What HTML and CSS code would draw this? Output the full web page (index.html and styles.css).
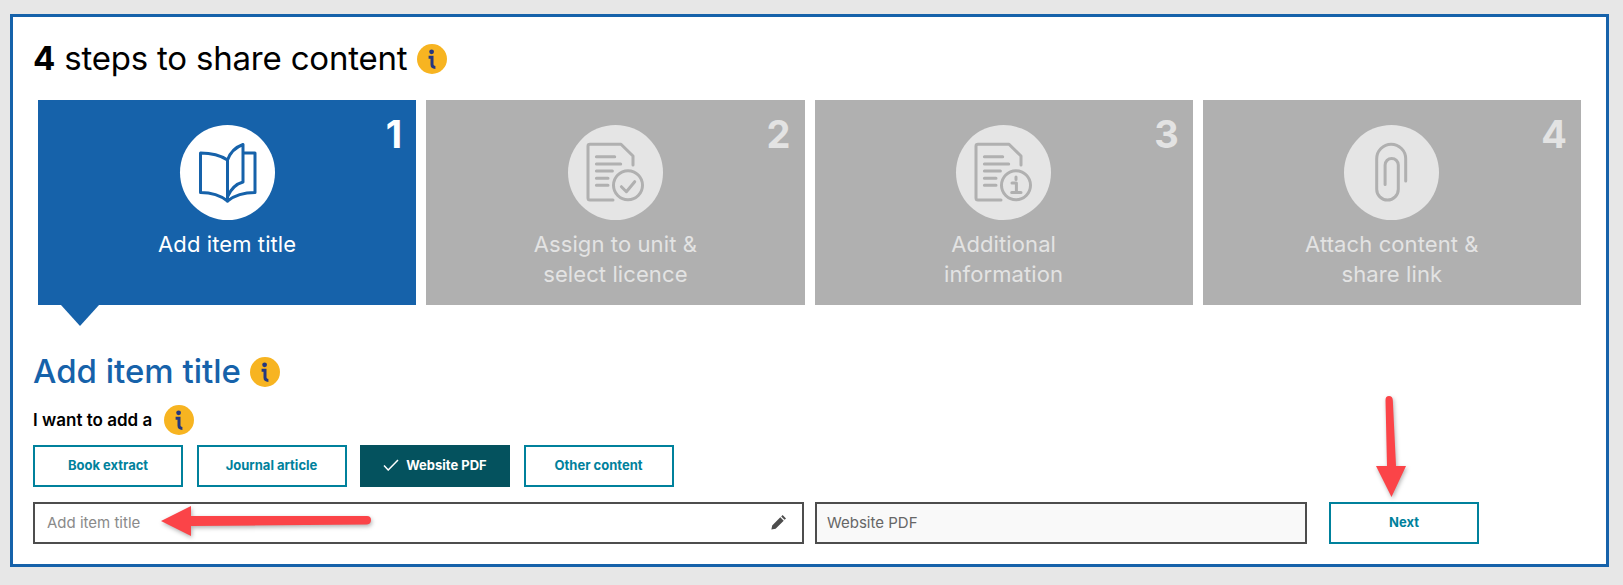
FILE: index.html
```html
<!DOCTYPE html>
<html lang="en">
<head>
<meta charset="utf-8">
<title>4 steps to share content</title>
<link rel="stylesheet" href="styles.css">
</head>
<body>
<svg width="0" height="0" class="defs" aria-hidden="true">
  <symbol id="info" viewBox="0 0 30 30">
    <circle cx="15" cy="15" r="15" fill="#f7b421"/>
    <circle cx="14.6" cy="7.8" r="2.4" fill="#24377f"/>
    <path d="M11.6 13.2H15V20.6Q15 23.4 18.4 23.4" fill="none" stroke="#24377f" stroke-width="3"/>
  </symbol>
</svg>
<main class="panel">
  <div class="title-row">
    <h1 class="title"><b>4</b> steps to share content</h1>
    <svg class="info"><use href="#info"/></svg>
  </div>
  <div class="steps">
    <section class="step step-active">
      <span class="step-num">1</span>
      <div class="step-circle">
        <svg viewBox="0 0 95 95" class="step-icon icon-blue">
          <path d="M47.5 35C40 30 30 28 20.5 28V67.5C30 67.5 40 70 47.5 76C55 70 65 67.5 75 67.5V28H64"/>
          <path d="M47.5 76V35C50 28 56 22 63 19.5V57C56 59 51 64 48 71"/>
        </svg>
      </div>
      <div class="step-label">Add item title</div>
    </section>
    <section class="step">
      <span class="step-num">2</span>
      <div class="step-circle">
        <svg viewBox="0 0 95 95" class="step-icon">
          <path d="M45 75H22Q20 75 20 73V21Q20 19.3 22 19.3H53L65 31V40"/>
          <path d="M28.4 31.7H46.7M28.4 39H52.7M28.4 46H44.4M28.4 53.3H40M28.4 60.3H40"/>
          <circle cx="60" cy="60.3" r="14.5"/>
          <path d="M53.4 61.7L58.4 66.7L66.7 56.7"/>
        </svg>
      </div>
      <div class="step-label">Assign to unit &amp;<br>select licence</div>
    </section>
    <section class="step">
      <span class="step-num">3</span>
      <div class="step-circle">
        <svg viewBox="0 0 95 95" class="step-icon">
          <path d="M45 75H22Q20 75 20 73V21Q20 19.3 22 19.3H53L65 31V40"/>
          <path d="M28.4 31.7H46.7M28.4 39H52.7M28.4 46H44.4M28.4 53.3H40M28.4 60.3H40"/>
          <circle cx="60" cy="60.3" r="14.5"/>
          <path d="M56 58H60.4V67M55.7 67.4H65M60 52V54.5"/>
        </svg>
      </div>
      <div class="step-label">Additional<br>information</div>
    </section>
    <section class="step">
      <span class="step-num">4</span>
      <div class="step-circle">
        <svg viewBox="0 0 95 95" class="step-icon">
          <path d="M61.7 56V33.8a14.5 14.5 0 0 0-29 0V64.2a10.8 10.8 0 0 0 21.6 0V40a6.6 6.6 0 0 0-13.2 0V59.5"/>
        </svg>
      </div>
      <div class="step-label">Attach content &amp;<br>share link</div>
    </section>
  </div>
  <div class="heading-row">
    <h2 class="heading">Add item title</h2>
    <svg class="info"><use href="#info"/></svg>
  </div>
  <div class="want-row">
    <span class="want">I want to add a</span>
    <svg class="info"><use href="#info"/></svg>
  </div>
  <div class="choices">
    <button class="btn">Book extract</button>
    <button class="btn">Journal article</button>
    <button class="btn btn-active">
      <svg class="check" viewBox="0 0 16 12"><path d="M1 6.5L5.2 11L15 1"/></svg>Website PDF
    </button>
    <button class="btn">Other content</button>
  </div>
  <div class="fields">
    <div class="field field-title">
      <span class="placeholder">Add item title</span>
      <svg class="pencil" viewBox="0 0 16 16"><path d="M11.6 1L15 4.4L13.6 5.8L10.2 2.4ZM9.3 3.3L12.7 6.7L4.6 14.8L0.4 15.6L1.2 11.4Z"/></svg>
    </div>
    <div class="field field-type"><span class="value">Website PDF</span></div>
    <button class="btn btn-next">Next</button>
  </div>
</main>
<svg class="arrows" viewBox="0 0 1623 585" aria-hidden="true">
  <g class="arrow">
    <path d="M161 521L191 506V516L367 516Q371 516 371 520Q371 524 367 524.500L191 526V536Z"/>
    <path d="M1385.500 400Q1385.500 396 1389 396Q1392.500 396 1392.800 400L1396 466H1406L1391.500 497L1376 466H1387Z"/>
  </g>
</svg>
</body>
</html>
```
FILE: styles.css
```css
* { box-sizing: border-box; }
html, body { margin: 0; }
body {
  position: relative;
  width: 1623px;
  height: 585px;
  overflow: hidden;
  padding: 14px 14px 18px 10px;
  background: #e7e7e7;
  font-family: Inter, "Liberation Sans", sans-serif;
  color: #000;
}
.defs { position: absolute; }
.panel {
  height: 553px;
  border: 3px solid #1662aa;
  background: #fff;
  padding: 27px 0 20px 20px;
}
.title-row, .heading-row, .want-row { display: flex; align-items: center; height: 30px; }
.title {
  margin: 0 10px 0 0;
  padding-bottom: 2px;
  font-size: 33px;
  font-weight: 400;
  letter-spacing: -0.2px;
  line-height: 30px;
}
.title b { font-weight: 700; }
.info { width: 30px; height: 30px; flex: none; }
.steps {
  display: flex;
  gap: 10px;
  margin: 26px 25px 0 5px;
}
.step {
  position: relative;
  flex: 1 1 0;
  height: 205px;
  padding-top: 25px;
  background: #b0b0b0;
  color: #e3e3e3;
  text-align: center;
}
.step-active { background: #1662aa; color: #fff; }
.step-active::after {
  content: "";
  position: absolute;
  left: 23px;
  top: 100%;
  border-left: 19px solid transparent;
  border-right: 19px solid transparent;
  border-top: 21px solid #1662aa;
}
.step-num {
  position: absolute;
  top: 15px;
  right: 14px;
  font-size: 38px;
  font-weight: 700;
  line-height: 38px;
}
.step-circle {
  width: 95px;
  height: 95px;
  margin: 0 auto;
  border-radius: 50%;
  background: #e5e5e5;
}
.step-active .step-circle { background: #fff; }
.step-icon {
  display: block;
  width: 95px;
  height: 95px;
  fill: none;
  stroke: #b0b0b0;
  stroke-width: 3;
  stroke-linecap: round;
  stroke-linejoin: round;
}
.icon-blue { stroke: #1662aa; }
.step-label {
  margin-top: 9px;
  font-size: 22px;
  letter-spacing: 0.1px;
  line-height: 30px;
}
.heading-row { margin-top: 52px; }
.heading {
  margin: 0 9px 0 0;
  padding-bottom: 2px;
  font-size: 33px;
  font-weight: 500;
  line-height: 30px;
  color: #1662aa;
}
.want-row { margin-top: 18px; }
.want { margin-right: 12px; font-size: 17px; font-weight: 600; }
.choices { display: flex; gap: 13.5px; margin-top: 10px; }
.btn {
  display: flex;
  align-items: center;
  justify-content: center;
  width: 150px;
  height: 42px;
  padding: 0 0 2px;
  border: 2px solid #00819c;
  background: #fff;
  color: #00819c;
  font-family: inherit;
  font-size: 13px;
  font-weight: 700;
}
.btn-active { border-color: #04525e; background: #04525e; color: #fff; }
.check {
  width: 16px;
  height: 12px;
  margin-right: 7px;
  fill: none;
  stroke: #fff;
  stroke-width: 1.5;
}
.fields { display: flex; margin-top: 15px; }
.field {
  display: flex;
  align-items: center;
  justify-content: space-between;
  height: 42px;
  border: 2px solid #4d4d4d;
  padding: 0 15px 2px 12px;
  font-size: 15px;
}
.field-title { width: 771px; margin-right: 11px; }
.field-type { width: 492px; margin-right: 22px; background: #f9f9f9; padding-left: 10px; }
.placeholder { color: #8a8a8a; }
.value { color: #666; }
.pencil { width: 16px; height: 16px; fill: #4d4d4d; }
.arrows {
  position: absolute;
  left: 0;
  top: 0;
  width: 1623px;
  height: 585px;
  pointer-events: none;
}
.arrow { fill: #fb4448; filter: drop-shadow(1px 2px 2px rgba(0, 0, 0, 0.3)); }
```
